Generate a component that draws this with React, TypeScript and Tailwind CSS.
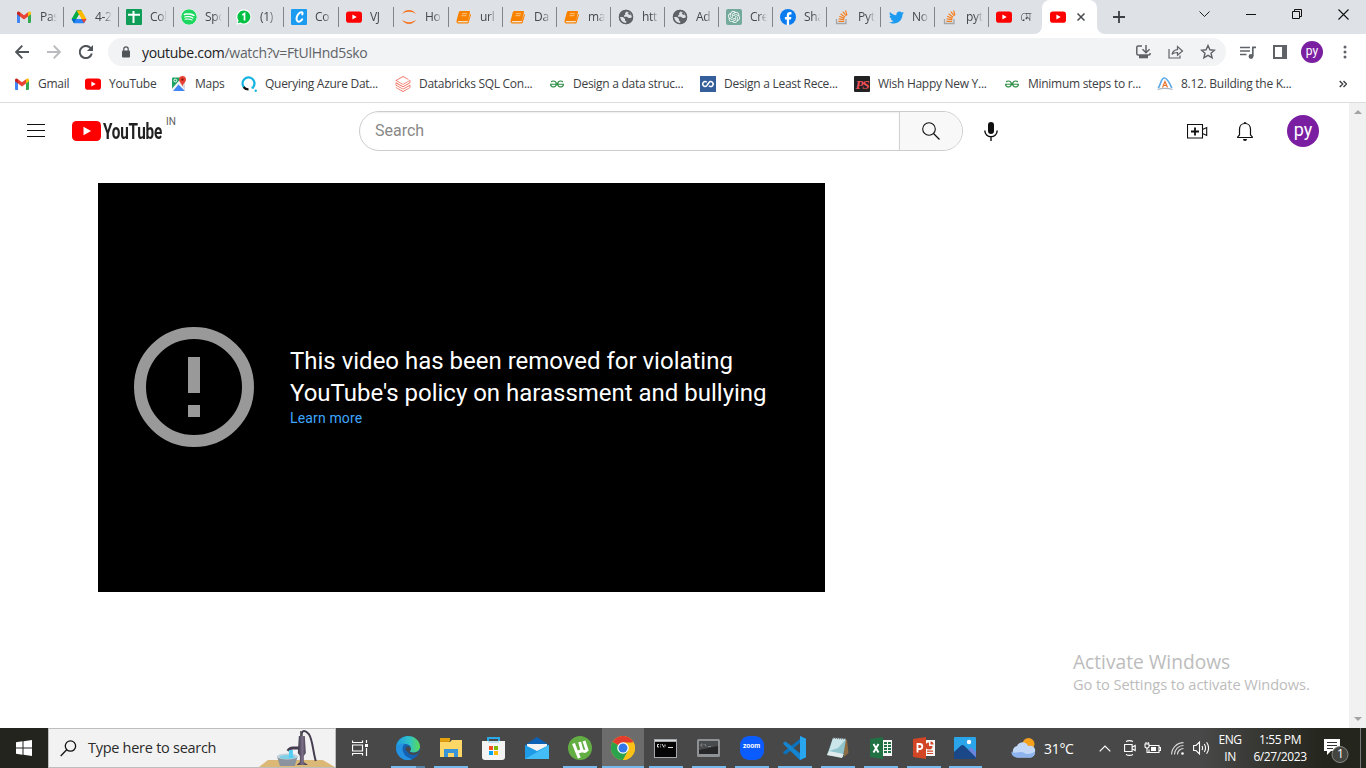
import type { ReactNode } from "react";
import { FaSpotify, FaTwitter } from "react-icons/fa";
import { SiGeeksforgeeks, SiDatabricks, SiOpenai } from "react-icons/si";

const UI = "font-['Open_Sans','Noto_Sans',sans-serif]";

function Gmail() {
  return (
    <svg width="16" height="16" viewBox="0 0 16 16">
      <path d="M1 4.2V13a.9.9 0 0 0 .9.9H4V7L1 4.2z" fill="#4285f4" />
      <path d="M15 4.2V13a.9.9 0 0 1-.9.9H12V7l3-2.800z" fill="#34a853" />
      <path d="M12 3.300V7.500l3-2.200V4c0-1.600-1.800-2.300-3-.700z" fill="#fbbc04" />
      <path d="M4 7.500V3.300l4 3 4-3v4.200l-4 3-4-3z" fill="#ea4335" />
      <path d="M1 4v1.300l3 2.200V3.300C2.800 1.700 1 2.400 1 4z" fill="#c5221f" />
    </svg>
  );
}

function YouTube() {
  return (
    <svg width="16" height="16" viewBox="0 0 16 16">
      <rect x="0" y="2.500" width="16" height="11.200" rx="2.800" fill="#f00" />
      <path d="M6.400 5.600v5l4.300-2.500z" fill="#fff" />
    </svg>
  );
}

function Drive() {
  return (
    <svg width="16" height="16" viewBox="0 0 16 16">
      <path d="M5.500 1.500h5L5.400 10.200 3 14.300.600 10z" fill="#00ac47" />
      <path d="M5.500 1.500h5L8 5.800z" fill="#00832d" />
      <path d="M5.500 1.500h5l5 8.500h-5z" fill="#ffba00" />
      <path d="M5.400 10h10.100L13 14.300H3z" fill="#2684fc" />
      <path d="M10.500 10h5L13 14.300z" fill="#ea4335" />
      <path d="M5.400 10 3 14.300.600 10z" fill="#0066da" />
      <path d="M8 5.800 10.500 10H5.500z" fill="#dee1e6" />
    </svg>
  );
}

function SheetCross() {
  return (
    <svg width="16" height="16" viewBox="0 0 16 16">
      <rect width="16" height="16" rx="1" fill="#0f9d58" />
      <path d="M2 5.700h12M7.500 2v12" stroke="#fff" strokeWidth="2" />
    </svg>
  );
}

function Spotify() {
  return <FaSpotify size={16} color="#1ed760" className="rounded-full bg-white" />;
}

function WhatsApp() {
  return (
    <svg width="16" height="16" viewBox="0 0 16 16">
      <path d="M8 .300A7.600 7.600 0 0 0 1.500 12L.400 15.700l3.900-1A7.600 7.600 0 1 0 8 .300z" fill="#fff" />
      <path d="M8 1.400a6.500 6.500 0 0 0-5.400 10.200L1.800 14.300l2.700-.800A6.500 6.500 0 1 0 8 1.400z" fill="#00c044" />
      <path d="M6.300 5.900 8.500 4.600v7" stroke="#fff" strokeWidth="1.700" fill="none" />
    </svg>
  );
}

function BlueC() {
  return (
    <svg width="16" height="16" viewBox="0 0 16 16">
      <rect width="16" height="16" rx="1" fill="#1c9cf0" />
      <path d="M11.300 5.400C12.400 3.200 10 2.200 7.700 4.600 5.400 7 4.700 11 6.500 12.300c1.400 1 3.500-.200 4.700-2" stroke="#fff" strokeWidth="2" fill="none" strokeLinecap="round" />
    </svg>
  );
}

function Jupyter() {
  return (
    <svg width="16" height="16" viewBox="0 0 16 16">
      <path d="M1 5.200C2.300 2.500 5 1 8 1s5.700 1.500 7 4.200C13 3.500 10.600 2.800 8 2.800S3 3.500 1 5.200z" fill="#f37726" />
      <path d="M1 10.800C2.300 13.500 5 15 8 15s5.700-1.500 7-4.200C13 12.500 10.600 13.200 8 13.200S3 12.500 1 10.800z" fill="#f37726" />
    </svg>
  );
}

function Book() {
  return (
    <svg width="16" height="16" viewBox="0 0 16 16">
      <path d="M4.500 2h8.500c.8 0 1.200.6 1 1.300L12.200 11c-.2.700-.6 1-1.200 1H3c-1 0-1.400.3-1.200.9.100.3.500.4 1 .4h8.700L14.300 5c.7.200.800.600.600 1.200l-2.200 7.200c-.2.700-.8 1-1.600 1H2.400C.900 14.400.100 13 .600 11.500L2.700 3.600C3 2.500 3.600 2 4.500 2z" fill="#f98100" />
      <path d="M6 4.700h5M5.500 6.700h5" stroke="#fbd3a0" strokeWidth=".8" />
      <path d="M2.500 12.600h8.800" stroke="#fbe3c4" strokeWidth=".8" />
    </svg>
  );
}

function Globe() {
  return (
    <svg width="16" height="16" viewBox="0 0 16 16">
      <circle cx="8" cy="8" r="7.200" fill="#5f6368" />
      <path d="M8.500 2.500 7 4.200l.4 1.300L6 6.500v1.200h3l1.500 1.300h1.700l1.800-.8C13.700 5 11.500 2.700 8.500 2.500z" fill="#dee1e6" />
      <path d="M9.500 3.700l2-.5 1.500 3-2.300-.6z" fill="#5f6368" />
      <path d="M2 8h3l2 2v1.500l1.500 1.200-.7 1.600C4.500 14 2.200 11.500 2 8z" fill="#dee1e6" />
      <circle cx="8" cy="8" r="6.600" stroke="#5f6368" strokeWidth="1.300" fill="none" />
    </svg>
  );
}

function OpenAI() {
  return (
    <span className="flex size-4 items-center justify-center rounded-[2px] bg-[#74aa9c]">
      <SiOpenai size={12} color="#fff" />
    </span>
  );
}

function Facebook() {
  return (
    <svg width="16" height="16" viewBox="0 0 16 16">
      <circle cx="8" cy="8" r="8" fill="#0a7cf0" />
      <path d="M9.100 16v-5.500h1.900l.400-2.400H9.100V6.700c0-.800.400-1.300 1.300-1.300h1.100V3.300c-2.800-.600-4.700.300-4.700 2.900v1.900H4.900v2.400h1.900V16z" fill="#fff" />
    </svg>
  );
}

function StackO() {
  return (
    <svg width="16" height="16" viewBox="0 0 16 16">
      <path d="M2.500 10v4.500h9.500V10" stroke="#a6a6a6" strokeWidth="1.300" fill="none" />
      <path d="M4.400 12.300h5.800M4.600 9.800l5.700.900M5.200 7.200l5.200 2.200M6.600 4.800l4.500 3.400M8.800 2.600l3.500 4.300M11.600 1.300l1.300 5" stroke="#f48024" strokeWidth="1.200" />
    </svg>
  );
}

function Twitter() {
  return <FaTwitter size={15} color="#1d9bf0" />;
}

const tabs: { icon: ReactNode; label: string }[] = [
  { icon: <Gmail />, label: "Pas" },
  { icon: <Drive />, label: "4-2" },
  { icon: <SheetCross />, label: "Col" },
  { icon: <Spotify />, label: "Spo" },
  { icon: <WhatsApp />, label: "(1)" },
  { icon: <BlueC />, label: "Co" },
  { icon: <YouTube />, label: "VJ" },
  { icon: <Jupyter />, label: "Ho" },
  { icon: <Book />, label: "url" },
  { icon: <Book />, label: "Da" },
  { icon: <Book />, label: "ma" },
  { icon: <Globe />, label: "htt" },
  { icon: <Globe />, label: "Ad" },
  { icon: <OpenAI />, label: "Cre" },
  { icon: <Facebook />, label: "Sha" },
  { icon: <StackO />, label: "Pyt" },
  { icon: <Twitter />, label: "No" },
  { icon: <StackO />, label: "pyt" },
  { icon: <YouTube />, label: "মে" },
];

function TabStrip() {
  return (
    <div className="flex h-[34px] shrink-0 bg-[#dee1e6] pl-2">
      {tabs.map((t, i) => (
        <div key={i} className={`relative flex shrink-0 items-center ${i < 8 ? "w-[55px]" : "w-[54px]"}`}>
          {i > 0 && <span className="absolute top-[7px] left-0 h-5 w-px bg-[#80868b]" />}
          <span className="ml-2 flex size-4 shrink-0 items-center justify-center">{t.icon}</span>
          <span className="ml-2 w-[22px] text-[12px] tracking-[-0.3px] whitespace-nowrap text-[#45484c] [mask-image:linear-gradient(90deg,#000_9px,transparent_17px)]">
            {t.label}
          </span>
        </div>
      ))}
      <div className="relative flex w-[55px] shrink-0 items-center rounded-t-lg bg-white">
        <svg className="absolute bottom-0 -left-2" width="8" height="8"><path d="M8 0v8H0a8 8 0 0 0 8-8z" fill="#fff" /></svg>
        <svg className="absolute -right-2 bottom-0" width="8" height="8"><path d="M0 0v8h8a8 8 0 0 1-8-8z" fill="#fff" /></svg>
        <span className="ml-2"><YouTube /></span>
        <svg className="ml-[11px]" width="8" height="8" viewBox="0 0 8 8"><path d="M.5.500l7 7M7.500.500l-7 7" stroke="#45494d" strokeWidth="1.500" /></svg>
      </div>
      <div className="ml-4 flex items-center">
        <svg width="12" height="12" viewBox="0 0 12 12"><path d="M6 0v12M0 6h12" stroke="#3c4043" strokeWidth="1.800" /></svg>
      </div>
      <div className="ml-[74px] flex items-start pt-[9px]">
        <svg width="11" height="11" viewBox="0 0 11 11"><path d="M.5 2.500l5 5 5-5" stroke="#222" fill="none" /></svg>
        <svg className="ml-[36px]" width="10" height="11" viewBox="0 0 10 11"><path d="M0 5.500h10" stroke="#111" /></svg>
        <svg className="ml-[36px]" width="10" height="11" viewBox="0 0 10 11"><path d="M.5 2.500h7v7h-7zM2.500 2V.500h7v7H8" stroke="#111" fill="none" /></svg>
        <svg className="ml-[36px]" width="11" height="11" viewBox="0 0 11 11"><path d="M.5.500l10 10M10.500.500l-10 10" stroke="#111" strokeWidth="1.100" /></svg>
      </div>
    </div>
  );
}

function Toolbar() {
  return (
    <div className="flex h-9 shrink-0 items-center bg-white">
      <svg className="ml-[15px]" width="14" height="14" viewBox="0 0 14 14"><path d="M14 7H1.500M7.300.700 1.200 7l6.100 6.300" stroke="#50555a" strokeWidth="1.900" fill="none" /></svg>
      <svg className="ml-[18px]" width="14" height="14" viewBox="0 0 14 14"><path d="M0 7h12.500M6.700.700 12.800 7l-6.100 6.300" stroke="#b9bbbe" strokeWidth="1.900" fill="none" /></svg>
      <svg className="ml-[18px]" width="14" height="14" viewBox="0 0 14 14"><path d="M12.800 8.500A6.100 6.100 0 1 1 11.500 3l1 1.200" stroke="#50555a" strokeWidth="2" fill="none" /><path d="M14 0v6H8z" fill="#50555a" /></svg>
      <div className="ml-[15px] flex h-7 w-[1118px] items-center rounded-full bg-[#f1f3f4]">
        <svg className="ml-[14px]" width="8" height="12" viewBox="0 0 8 12"><rect y="4.500" width="8" height="7" rx="1" fill="#50555a" /><path d="M1.800 5V3a2.200 2.200 0 0 1 4.400 0v2" stroke="#50555a" strokeWidth="1.200" fill="none" /></svg>
        <span className="ml-3 w-[992px] pt-px text-[14px] tracking-[-0.300px] text-[#5f6368]"><span className="text-[#202124]">youtube.com</span>/watch?v=FtUlHnd5sko</span>
        <svg className="ml-[2px]" width="15" height="14" viewBox="0 0 15 14"><path d="M6 1H2.200C1.300 1 .800 1.500.800 2.200v6.600c0 .700.500 1.200 1.400 1.200h10.600c.8 0 1.300-.500 1.300-1.200V8M10 0v6.500M6.500 4.300 10 7.700l3.600-3.400" stroke="#5f6368" strokeWidth="1.500" fill="none" /><path d="M3 10h9v3.300H3z" fill="#5f6368" /></svg>
        <svg className="ml-[17px]" width="16" height="14" viewBox="0 0 16 14"><path d="M1 4v9h11v-2.500M4 9.500c.7-3 2.500-4.600 5.500-4.800V1.500L14.500 6l-5 4.300V7.500C7 7.400 5.200 8 4 9.500z" stroke="#5f6368" strokeWidth="1.200" fill="none" /></svg>
        <svg className="ml-4" width="16" height="16" viewBox="0 0 16 16"><path d="M8 1.500l1.900 4.300 4.600.400-3.500 3 1.100 4.600L8 11.300l-4.100 2.500L5 9.200l-3.500-3 4.600-.400z" stroke="#5f6368" strokeWidth="1.400" fill="none" /></svg>
      </div>
      <svg className="ml-[14px]" width="16" height="13" viewBox="0 0 16 13"><path d="M0 1.500h10M0 5h10M0 8.500h6.500M12.800 10V1.400h3.200" stroke="#5f6368" strokeWidth="1.700" fill="none" /><circle cx="11" cy="10.500" r="2.400" fill="#5f6368" /></svg>
      <svg className="ml-[17px]" width="14" height="14" viewBox="0 0 14 14"><path d="M1 1h12v12H1z" stroke="#5f6368" strokeWidth="2" fill="none" /><path d="M9 0h5v14H9z" fill="#5f6368" /></svg>
      <span className="ml-[14px] flex size-[22px] items-center justify-center rounded-full bg-[#7b1fa2] pb-[3px] font-[Roboto,sans-serif] text-[12px] text-white">py</span>
      <svg className="ml-5" width="4" height="14" viewBox="0 0 4 14" fill="#5f6368"><circle cx="2" cy="2" r="1.500" /><circle cx="2" cy="7" r="1.500" /><circle cx="2" cy="12" r="1.500" /></svg>
    </div>
  );
}

function MapsIcon() {
  return (
    <svg width="16" height="16" viewBox="0 0 16 16">
      <path d="M1.500 1.500h9L2 13.500H1v-11z" fill="#1ea362" />
      <path d="M10.500 2 1 12.500V15l13-10z" fill="#f3f3f3" />
      <path d="M7.500 8.500l6.500 6.500H2z" fill="#4285f4" />
      <path d="M9 7.500l5-3v9.500z" fill="#dadada" />
      <path d="M11.500 0A3.500 3.500 0 0 0 8 3.500C8 6 10.600 7 11.500 10.500 12.400 7 15 6 15 3.500A3.500 3.500 0 0 0 11.500 0z" fill="#ea4335" />
      <circle cx="11.500" cy="3.500" r="1.200" fill="#8b1a12" />
      <circle cx="4.300" cy="4.500" r="1.400" stroke="#fff" fill="none" />
    </svg>
  );
}

function QIcon() {
  return (
    <svg width="16" height="16" viewBox="0 0 16 16" fill="none" strokeWidth="2.200">
      <path d="M3.300 11.700A6 6 0 1 1 12.300 11" stroke="#12b3e0" />
      <path d="M2.600 11A6 6 0 0 0 7.500 13.400" stroke="#111" />
      <path d="M10.500 11.300l2.400.6" stroke="#12b3e0" />
      <circle cx="14.700" cy="14.700" r="1.200" fill="#12b3e0" />
    </svg>
  );
}

function CoIcon() {
  return (
    <svg width="16" height="16" viewBox="0 0 16 16">
      <rect width="16" height="16" fill="#345f9a" />
      <path d="M6.700 6.300A2.300 2.500 0 1 0 6.700 9.800L9 6.500a2.300 2.500 0 1 1 0 3.200" stroke="#fff" strokeWidth="1.500" fill="none" />
    </svg>
  );
}

function PSIcon() {
  return (
    <span className="flex size-4 items-center justify-center rounded-[1px] bg-[#222] font-['Liberation_Serif',serif] text-[13px] leading-none font-bold tracking-[-1px] text-[#f0505a] italic">PS</span>
  );
}

function ArcIcon() {
  return (
    <svg width="16" height="16" viewBox="0 0 16 16" fill="none">
      <path d="M1.200 12C3.500 9.500 3.800 2.500 7 2s5.500 4.500 7.800 10" stroke="#5aa9e6" strokeWidth="1.700" />
      <path d="M5.500 11.500 8 5.500l2.500 6M6.500 9.500h3" stroke="#e8722c" strokeWidth="1.200" />
      <path d="M.5 13.500c4-1.500 11-1.500 15 0" stroke="#a9b5c0" strokeWidth="1.200" />
    </svg>
  );
}

const bookmarks: { icon: ReactNode; label: string; w: string }[] = [
  { icon: <Gmail />, label: "Gmail", w: "w-[71px]" },
  { icon: <YouTube />, label: "YouTube", w: "w-[86px]" },
  { icon: <MapsIcon />, label: "Maps", w: "w-[70px]" },
  { icon: <QIcon />, label: "Querying Azure Dat...", w: "w-[154px]" },
  { icon: <SiDatabricks size={16} color="#f0705f" />, label: "Databricks SQL Con...", w: "w-[154px]" },
  { icon: <SiGeeksforgeeks size={14} color="#2f8d46" />, label: "Design a data struc...", w: "w-[151px]" },
  { icon: <CoIcon />, label: "Design a Least Rece...", w: "w-[154px]" },
  { icon: <PSIcon />, label: "Wish Happy New Y...", w: "w-[150px]" },
  { icon: <SiGeeksforgeeks size={14} color="#2f8d46" />, label: "Minimum steps to r...", w: "w-[153px]" },
  { icon: <ArcIcon />, label: "8.12. Building the K...", w: "w-[150px]" },
];

function Bookmarks() {
  return (
    <div className="flex h-[33px] shrink-0 items-center border-b border-[#dadce0] bg-white pb-1 pl-[14px]">
      {bookmarks.map((b, i) => (
        <div key={i} className={`flex shrink-0 items-center gap-2 ${b.w}`}>
          <span className="flex size-4 shrink-0 items-center justify-center">{b.icon}</span>
          <span className="text-[12px] tracking-[-0.28px] whitespace-nowrap text-[#3c4043]">{b.label}</span>
        </div>
      ))}
      <svg className="ml-[32px]" width="8" height="8" viewBox="0 0 8 8"><path d="M.7 1l3 3-3 3M4.500 1l3 3-3 3" stroke="#3c4043" strokeWidth="1.400" fill="none" /></svg>
    </div>
  );
}

function YTHeader() {
  return (
    <div className="flex h-14 items-center">
      <svg className="mb-px ml-[27px]" width="18" height="13" viewBox="0 0 18 13"><path d="M0 .5h18M0 6.500h18M0 12.500h18" stroke="#0f0f0f" /></svg>
      <svg className="ml-[27px]" width="29" height="20" viewBox="0 0 29 20"><rect width="29" height="20" rx="4.500" fill="#f00" /><path d="M11.500 5.700v8.600l7.500-4.300z" fill="#fff" /></svg>
      <span className="ml-[2px] w-[60px] origin-left scale-x-[.71] pt-px font-[Roboto,sans-serif] text-[21.500px] leading-5 font-bold tracking-[-0.3px] text-[#212121]">YouTube</span>
      <span className="mb-[19px] ml-[3px] w-[193px] font-[Roboto,sans-serif] text-[10px] text-[#606060]">IN</span>
      <div className="flex h-10 w-[604px] overflow-hidden rounded-full border border-[#ccc]">
        <div className="flex w-[539px] items-center pl-[15px] font-[Roboto,sans-serif] text-base text-[#888] shadow-[inset_0_1px_2px_#eee]">Search</div>
        <div className="flex flex-1 items-center justify-center border-l border-[#d3d3d3] bg-[#f8f8f8] pr-px">
          <svg width="18" height="18" viewBox="0 0 18 18"><circle cx="7" cy="7" r="6.300" stroke="#0f0f0f" strokeWidth="1.100" fill="none" /><path d="M11.500 11.500l6 6" stroke="#0f0f0f" strokeWidth="1.200" /></svg>
        </div>
      </div>
      <svg className="ml-[21px]" width="14" height="19" viewBox="0 0 14 19"><rect x="4" width="6" height="12" rx="3" fill="#0f0f0f" /><path d="M.800 8.500a6.200 6.200 0 0 0 12.400 0M7 15v4" stroke="#0f0f0f" strokeWidth="1.400" fill="none" /></svg>
      <svg className="ml-[189px]" width="21" height="15" viewBox="0 0 21 15"><path d="M.5.500h15v13.500H.500zM15.500 5.500l4.200-2v8l-4.200-2" stroke="#0f0f0f" strokeWidth="1.100" fill="none" /><path d="M8 3.500v8M4 7.500h8" stroke="#0f0f0f" strokeWidth="1.800" /></svg>
      <svg className="ml-[29px]" width="16" height="20" viewBox="0 0 16 20"><path d="M.700 16.500h14.600v-.600L13.500 14V8.500C13.500 5 11.300 2.500 8 2.500S2.500 5 2.500 8.500V14L.700 15.900z" stroke="#0f0f0f" strokeWidth="1.200" fill="none" /><path d="M6.500 2.500a1.500 1.500 0 0 1 3 0zM6 18h4a2 2 0 0 1-4 0z" fill="#0f0f0f" /></svg>
      <span className="ml-[34px] flex size-8 items-center justify-center rounded-full bg-[#7b1fa2] pb-[4px] font-[Roboto,sans-serif] text-[18px] text-white">py</span>
    </div>
  );
}

function Page() {
  return (
    <div className="flex min-h-0 flex-1 bg-white">
      <div className="relative w-[1349px]">
        <YTHeader />
        <div className="mt-6 ml-[98px] flex h-[409px] w-[727px] items-center bg-black pb-px pl-9">
          <svg width="120" height="120" viewBox="0 0 120 120"><circle cx="60" cy="60" r="54" stroke="#999" strokeWidth="12" fill="none" /><path d="M54 30h12v36H54zM54 78h12v12H54z" fill="#999" /></svg>
          <div className="ml-9 pb-[3px] font-[Roboto,sans-serif]">
            <div className="text-[24px] leading-8 tracking-[-0.01px] text-white">This video has been removed for violating<br />YouTube's policy on harassment and bullying</div>
            <div className="text-[14px] leading-[18px] tracking-[0.15px] text-[#3ea6ff]">Learn more</div>
          </div>
        </div>
        <div className="absolute top-[547px] left-[1073px] whitespace-nowrap text-[#bcbcbc]">
          <div className="text-[19.200px] leading-6 tracking-[-0.02px]">Activate Windows</div>
          <div className="text-[14.600px] leading-[21px] tracking-[-0.070px]">Go to Settings to activate Windows.</div>
        </div>
      </div>
      <div className="flex w-[17px] flex-col items-center justify-between bg-[#f1f1f1] py-[7px]">
        <svg width="8" height="4"><path d="M0 4l4-4 4 4z" fill="#a3a3a3" /></svg>
        <svg width="8" height="4"><path d="M0 0l4 4 4-4z" fill="#a3a3a3" /></svg>
      </div>
    </div>
  );
}

function Pump() {
  return (
    <svg width="76" height="38" viewBox="0 0 76 38">
      <defs><linearGradient id="pump"><stop offset="0" stopColor="#2d2838" /><stop offset=".5" stopColor="#7c7088" /><stop offset="1" stopColor="#2d2838" /></linearGradient></defs>
      <path d="M9 31h55l12 7H0z" fill="#dcb877" />
      <path d="M43 8C42 1 46 0 50 5c4 6 4 17 7 27" stroke="#453c50" strokeWidth="2" fill="none" />
      <path d="M41 19h-7c-3 0-4 1-5 3" stroke="#453c50" strokeWidth="3" fill="none" />
      <path d="M42 2v8" stroke="#555" strokeWidth="1.500" />
      <path d="M40 7h6l1 17-2 3v6l4 3H38l3-3v-6l-2-3z" fill="url(#pump)" />
      <path d="M18 27h21l-3 10H21z" fill="#8a939e" />
      <ellipse cx="28.500" cy="27.500" rx="10.500" ry="3" fill="#c1d2dd" />
      <ellipse cx="28.500" cy="28" rx="8" ry="2" fill="#7fd0e6" />
      <path d="M30 21h4v8h-4z" fill="#54cdf2" />
    </svg>
  );
}

const Edge = () => (
  <svg width="24" height="24" viewBox="0 0 24 24">
    <defs>
      <linearGradient id="eg" x1="0" x2="1"><stop offset="0" stopColor="#1e9be0" /><stop offset=".55" stopColor="#2fc2c8" /><stop offset="1" stopColor="#5ada55" /></linearGradient>
    </defs>
    <circle cx="12" cy="12" r="12" fill="#1560b0" />
    <path d="M0 12C0 5 5.500 0 12 0s12 5 12 10.500c0 3.700-3 6-6.500 6-3 0-4.200-1-3.500-2 2-2.700 0-6.500-4.500-6.500C5 8 1 10 0 12z" fill="url(#eg)" />
    <path d="M0 12c1.500-3.500 5.500-5 9.500-4.500-3 1.500-3.700 5.500-2 9C9 20.500 13 22.500 16.500 23 8 27 0 20 0 12z" fill="#2492e0" />
    <path d="M14 14.500c-1 1.200.5 2.200 3.500 2.200 2.500 0 4.700-1 5.800-2.700-.3 1.300-.8 2.500-1.300 3.500-2.500 1.600-8 2-9.500-.5-.7-1.200 0-2.500 1.500-2.500z" fill="#484848" />
    <circle cx="12.200" cy="13" r="2.600" fill="#484848" />
  </svg>
);
const Explorer = () => (
  <svg width="22" height="20" viewBox="0 0 22 20"><path d="M0 2h8l3 3H0z" fill="#d9980f" /><path d="M0 0h10v3H0z" fill="#e2a30f" /><path d="M0 4h10l2-2h10v17H0z" fill="#ffd766" /><path d="M4 11h14v8h-4v-4H8v4H4z" fill="#3a94d8" /></svg>
);
const Store = () => (
  <svg width="23" height="23" viewBox="0 0 23 23"><path d="M6 6V1h11v5" stroke="#29a9e8" strokeWidth="2" fill="none" /><path d="M0 4h23v16a3 3 0 0 1-3 3H3a3 3 0 0 1-3-3z" fill="#f4f4f4" /><path d="M6 4h11v2H6z" fill="#29a9e8" opacity=".25" /><path d="M7 9h4v4H7z" fill="#f25022" /><path d="M12 9h4v4h-4z" fill="#7fba00" /><path d="M7 14h4v4H7z" fill="#00a4ef" /><path d="M12 14h4v4h-4z" fill="#ffb900" /></svg>
);
const Mail = () => (
  <svg width="24" height="22" viewBox="0 0 24 22"><path d="M0 8l12-8 12 8v6H0z" fill="#0d62b5" /><path d="M2 7h20v6l-10 4L2 13z" fill="#f4f4f4" /><path d="M0 8l12 6 12-6v14H0z" fill="#1e9be6" /><path d="M0 22 13 14.500 24 8v14z" fill="#43bdf5" /></svg>
);
const Torrent = () => (
  <svg width="24" height="24" viewBox="0 0 24 24"><circle cx="12" cy="12" r="12" fill="#62ae43" /><path d="M5.500 7.500 8 14c1 2.800 5.500 2.300 5.500-1L11.700 6M8 14l3.300 8M13.500 13c1 3 3.500 3 5.500 1L16 5" stroke="#fff" strokeWidth="3" fill="none" /></svg>
);
const Chrome = () => (
  <svg width="24" height="24" viewBox="0 0 24 24"><circle cx="12" cy="12" r="12" fill="#fbc116" /><path d="M12 12 1.600 6A12 12 0 0 1 22.400 6z" fill="#e33b2e" /><path d="M1.600 6A12 12 0 0 0 12 24l5.200-9L12 12z" fill="#2aa34c" /><path d="M12 6.500h10.700A12 12 0 0 1 12 24l5-9z" fill="#fbc116" /><circle cx="12" cy="12" r="5.800" fill="#fff" /><circle cx="12" cy="12" r="4.500" fill="#3278ea" /></svg>
);
const Cmd = () => (
  <svg width="23" height="19" viewBox="0 0 23 19"><rect width="23" height="19" fill="#a5a8ad" /><path d="M1 3h21v15H1z" fill="#050505" /><path d="M1 1h21v1H1z" fill="#dadada" /><path d="M5 5.500H3.500V8H5M6.500 5.500v.8M6.500 7.500v.8M8 5l2 3.500M11 5.500v2M14 8.500h5" stroke="#e2e2e2" fill="none" /></svg>
);
const Cmd2 = () => (
  <svg width="23" height="18" viewBox="0 0 23 18"><rect width="23" height="18" rx="1.500" fill="#8f9295" /><rect x="2" y="2" width="19" height="13" fill="#252729" /><path d="M2 2h19v5L2 11z" fill="#484b4e" /><path d="M5.500 5H4v2h1.500M7 5v.8M8 5l1 2.500M11 7.500h3" stroke="#9b9b9b" strokeWidth=".7" fill="none" /></svg>
);
const Zoom = () => (
  <span className="flex size-6 items-center justify-center rounded-[9px] bg-[#0b5cff] pb-[2px] font-[Inter,sans-serif] text-[6.500px] font-bold text-white">zoom</span>
);
const Code = () => (
  <svg width="24" height="24" viewBox="0 0 24 24"><path d="M17 0 23 2.700v18.600L17 24 7.500 14.800 2.500 18.500.300 17.300V16L17 3z" fill="#0b73bd" /><path d="M.300 6.700 2.500 5.500l5 3.700L17 18v6L.300 8z" fill="#1585cf" /><path d="M17 0l6 2.700v18.600L17 24z" fill="#29a6f0" /><path d="M17 7v10l-6.500-5z" fill="#484848" /></svg>
);
const Note = () => (
  <svg width="23" height="22" viewBox="0 0 23 22"><path d="M18 2l3 1 1.500 13L18 20z" fill="#8c6c42" /><path d="M7 1l13 1-3 18L1 18z" fill="#8fc4cd" /><path d="M7 1l13 1-8 9-9 3z" fill="#cbe6ea" /><path d="M3 14 1 18l15 3 1.500-4z" fill="#e1eaea" /><path d="M7 1l13 1" stroke="#777" strokeWidth="1.500" strokeDasharray="1 1" /></svg>
);
const Excel = () => (
  <svg width="22" height="22" viewBox="0 0 22 22"><path d="M12 3h10v16H12z" fill="#f6f6f6" /><path d="M14 5h3v2h-3zM18 5h3v2h-3zM14 8h3v2h-3zM18 8h3v2h-3zM14 11h3v2h-3zM18 11h3v2h-3zM14 14h3v2h-3zM18 14h3v2h-3z" fill="#207245" /><path d="M0 2 13 0v22L0 20z" fill="#207245" /><path d="M3.500 7l5 8.500M8.500 7l-5 8.500" stroke="#fff" strokeWidth="1.900" /></svg>
);
const Ppt = () => (
  <svg width="22" height="22" viewBox="0 0 22 22"><path d="M12 3h10v16H12z" fill="#f6f6f6" /><path d="M14 13.500h6v1.200h-6zM14 16h6v1h-6z" fill="#d24625" /><path d="M16 5.500a3.500 3.500 0 1 0 3.500 3.500H16z" fill="#d24625" /><path d="M17.500 4.500v3h3a3 3 0 0 0-3-3z" fill="#d24625" /><path d="M0 2 13 0v22L0 20z" fill="#d24625" /><path d="M4.500 15.500V7h2.200c3.500 0 3.500 5 0 5H4.500" stroke="#fff" strokeWidth="1.800" fill="none" /></svg>
);
const Photos = () => (
  <svg width="22" height="22" viewBox="0 0 22 22"><rect width="22" height="22" rx="1" fill="#2ba5ea" /><circle cx="15" cy="5" r="2.200" fill="#fff" /><path d="M12 15l5-5 5 5v7H12z" fill="#6b83dc" /><path d="M0 15l7-6.500c1-.8 2-.8 3 0L22 20.500V22H0z" fill="#194787" /></svg>
);

const LINE = "absolute bottom-0 left-[4px] h-[2px] w-[34px] bg-[#76b9ed]";
const apps: { icon: ReactNode; line: string }[] = [
  { icon: <Edge />, line: "absolute bottom-0 left-[4px] h-[2px] w-[34px] bg-linear-to-r from-[#76b9ed] from-75% to-[#5583a6] to-75%" },
  { icon: <Explorer />, line: LINE },
  { icon: <Store />, line: "hidden" },
  { icon: <Mail />, line: "hidden" },
  { icon: <Torrent />, line: LINE },
  { icon: <Chrome />, line: "absolute bottom-0 left-0 h-[2px] w-[42px] bg-[#76b9ed]" },
  { icon: <Cmd />, line: LINE },
  { icon: <Cmd2 />, line: LINE },
  { icon: <Zoom />, line: LINE },
  { icon: <Code />, line: LINE },
  { icon: <Note />, line: LINE },
  { icon: <Excel />, line: LINE },
  { icon: <Ppt />, line: LINE },
  { icon: <Photos />, line: "absolute bottom-0 left-[3px] h-[2px] w-[33px] bg-[#76b9ed]" },
];

function Taskbar() {
  return (
    <div className="flex h-10 shrink-0 items-stretch bg-linear-to-r from-[#484848] from-88% to-[#24251d] to-97% text-white">
      <div className="flex w-12 items-center justify-center bg-[#23241e]">
        <svg width="16" height="16" viewBox="0 0 16 16" fill="#fff"><path d="M0 2.200 6.500 1.300v6.200H0zM7.500 1.200 16 0v7.500H7.500zM0 8.500h6.500v6.200L0 13.800zM7.500 8.500H16V16l-8.500-1.200z" /></svg>
      </div>
      <div className="flex w-72 items-center border border-[#bdbdbd] bg-[#f2f2f2] text-[#2b2b2b]">
        <svg className="ml-[11px]" width="17" height="17" viewBox="0 0 17 17"><circle cx="10.500" cy="6" r="5.200" stroke="#111" strokeWidth="1.300" fill="none" /><path d="M6.700 9.800.700 16" stroke="#111" strokeWidth="1.300" /></svg>
        <span className="ml-[11px] w-[172px] text-[14.500px] tracking-[-0.270px] whitespace-nowrap">Type here to search</span>
        <Pump />
      </div>
      <div className="flex w-[51px] items-center pl-4">
        <svg width="17" height="16" viewBox="0 0 17 16"><path d="M.5.500v2h10v-2M.500 15.500v-2h10v2M.500 5h10v6H.500zM14.500 0v3M14.500 8v8" stroke="#fff" strokeWidth="1.200" fill="none" /><path d="M13 4h3v3h-3z" fill="#fff" /></svg>
      </div>
      {apps.map((a, i) => (
        <div key={i} className={`relative flex shrink-0 items-center justify-center pr-[2px] ${i === 13 ? "w-[39px]" : "w-[43px]"}`}>
          {i === 5 && <span className="absolute inset-y-0 left-0 w-[42px] bg-[#6c6c6c]" />}
          <span className="relative">{a.icon}</span>
          <span className={a.line} />
        </div>
      ))}
      <div className="flex items-center pl-[26px]">
        <svg width="26" height="22" viewBox="0 0 26 22"><circle cx="17.500" cy="7" r="6" fill="#f5a11c" /><path d="M6 20.500a6 6 0 0 1 0-11.500c2-5 9.500-5 11 0 5-1.500 8 2 7 6 0 3-2 5.500-5 5.500z" fill="#c3d8f7" /><path d="M6 20.500c-4-.5-6-3-5.500-6 3 3 8-1 12 1 4 3 8 1 11.500-1 0 3.500-2 6-5 6z" fill="#8db4ee" /></svg>
        <span className="ml-[7px] w-[53px] text-[14px] tracking-[-0.3px]">31°C</span>
        <svg className="ml-[2px]" width="12" height="7" viewBox="0 0 12 7"><path d="M.7 6.300 6 1l5.300 5.300" stroke="#fff" strokeWidth="1.200" fill="none" /></svg>
        <svg className="ml-[13px]" width="12" height="16" viewBox="0 0 12 16"><path d="M2 1.500Q5.500-.300 9 1.500M2 14.500q3.500 1.800 7 0M.600 4.500h7.500v7H.600zM8.500 7l2.700-1.500v5L8.500 9" stroke="#fff" strokeWidth="1.100" fill="none" /></svg>
        <svg className="ml-[8px]" width="17" height="12" viewBox="0 0 17 12"><path d="M5.500 3.500H15v7H5v-3M15.500 5.500h1v3h-1M1 2h4v3L3 6.500 1 5zM2 0v2M4.200 0v2M3 6v4.500h2" stroke="#fff" strokeWidth="1.100" fill="none" /><path d="M7 5h5v4H7z" fill="#fff" /></svg>
        <svg className="ml-[10px]" width="13" height="13" viewBox="0 0 13 13" fill="none" stroke="#ddd" strokeWidth="1.100"><path d="M.6 12.500A12 12 0 0 1 12.500.600M3.500 12.500a9 9 0 0 1 9-9M6.500 12.500a6 6 0 0 1 6-6" /><circle cx="11.500" cy="11.500" r="1.300" fill="#fff" stroke="none" /></svg>
        <svg className="ml-[9px]" width="17" height="14" viewBox="0 0 17 14"><path d="M.6 4.500H3L6.500 1v12L3 9.500H.600zM9 5q1.200 2 0 4M11.300 3q2.500 4 0 8M13.600 1.300q4 5.700 0 11.400" stroke="#fff" strokeWidth="1.100" fill="none" /></svg>
        <div className="ml-[3px] w-[34px] text-center text-[12px] leading-[17px] tracking-[-0.4px]">ENG<br />IN</div>
        <div className="ml-[2px] w-[62px] text-center text-[12px] leading-[17px] tracking-[-0.4px] whitespace-nowrap">1:55 PM<br />6/27/2023</div>
        <div className="relative ml-[13px] w-[36px] pt-1">
          <svg width="26" height="26" viewBox="0 0 26 26"><path d="M0 2h16v12H7l-4 4v-4H0z" fill="#fff" /><path d="M3 5.500h10M3 8.500h10M3 11.500h6" stroke="#333" /><circle cx="16" cy="17.500" r="8" fill="#45453f" stroke="#888" /></svg>
          <span className="absolute top-[13px] left-[13px] text-[12px] leading-[15px]">1</span>
        </div>
        <span className="h-full w-px bg-[#777]" />
      </div>
    </div>
  );
}

export default function App() {
  return (
    <div className={`flex h-[768px] w-[1366px] flex-col overflow-hidden bg-white ${UI}`}>
      <TabStrip />
      <Toolbar />
      <Bookmarks />
      <Page />
      <Taskbar />
    </div>
  );
}
